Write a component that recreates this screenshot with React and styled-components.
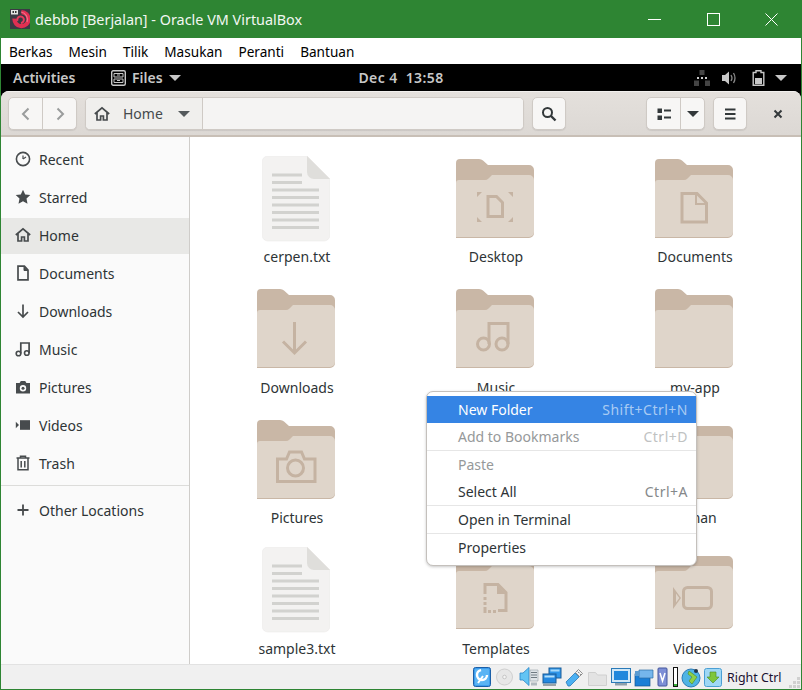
import React from 'react';
import styled, { createGlobalStyle } from 'styled-components';

const Global = createGlobalStyle`
  html, body { margin: 0; padding: 0; width: 802px; height: 690px; overflow: hidden; background: #2e8533; }
  * { box-sizing: border-box; }
`;
const GF = `"Noto Sans", "Open Sans", sans-serif`;

const Win = styled.div`display:flex;flex-direction:column;width:802px;height:690px;background:#2e8533;padding:0 1px 1px;font-family:${GF};`;
const TitleBar = styled.div`display:flex;align-items:center;height:38px;flex:none;color:#f2f7f2;font-size:14.4px;padding-left:9px;`;
const TitleText = styled.span`margin-left:5px;flex:1;`;
const WinBtn = styled.div`width:58.5px;height:38px;display:flex;align-items:center;justify-content:center;`;
const MenuBar = styled.div`display:flex;align-items:center;gap:16px;height:26px;flex:none;background:#fff;color:#000;font-size:13.6px;padding-left:8px;`;
const MenuLabel = styled.span``;
const Screen = styled.div`flex:1;min-height:0;display:flex;flex-direction:column;background:#000;`;
const TopBar = styled.div`height:27px;flex:none;display:flex;align-items:center;color:#c8c8c8;font-size:14px;font-weight:600;padding-left:12px;position:relative;`;
const Activities = styled.span`width:98px;`;
const AppMenu = styled.div`display:flex;align-items:center;gap:6px;flex:1;`;
const Clock = styled.span`position:absolute;left:0;right:0;text-align:center;letter-spacing:.4px;`;
const Tray = styled.div`display:flex;align-items:center;gap:10px;padding-right:14px;`;
const App = styled.div`flex:1;min-height:0;display:flex;flex-direction:column;background:#fafafa;border-radius:8px 8px 0 0;overflow:hidden;`;
const Header = styled.div`height:46px;flex:none;display:flex;align-items:center;background:linear-gradient(#e4e0dc,#dcd8d4);border-top:1px solid #f2f0ee;border-bottom:2px solid #c8bfb6;padding:0 0 0 7px;`;
const Group = styled.div`display:flex;height:33px;margin-right:${p=>p.$mr||0}px;border:1px solid #cfcac5;border-radius:5px;background:#f7f6f5;box-shadow:0 1px 1px rgba(0,0,0,.08);overflow:hidden;flex:none;`;
const Btn = styled.div`width:${p=>p.$w}px;display:flex;align-items:center;justify-content:center;gap:${p=>p.$gap||0}px;color:#454a4c;font-size:14px;border-left:${p=>p.$div?'1px solid #cfcac5':'none'};`;
const Entry = styled.div`width:321px;border-left:1px solid #cfcac5;background:#f5f4f3;`;
const HomeCrumb = styled.div`width:116px;display:flex;align-items:center;padding-left:8px;color:#454a4c;font-size:14px;background:#f0efed;`;
const CrumbText = styled.span`margin-left:13px;margin-right:15px;`;
const CloseBtn = styled.div`width:61px;flex:none;display:flex;align-items:center;justify-content:center;`;
const Body = styled.div`flex:1;min-height:0;display:flex;position:relative;`;
const Side = styled.nav`width:189px;flex:none;background:#fafafa;border-right:1px solid #cfcdca;padding-top:5px;`;
const SideRow = styled.div`height:36px;margin-bottom:2px;padding-bottom:2px;display:flex;align-items:center;padding-left:14px;gap:8px;font-size:14px;color:#2e3436;background:${p=>p.$on?'#e8e8e6':'transparent'};`;
const SideSep = styled.div`height:1px;background:#dcdcda;margin:3px 0 7px;`;
const Main = styled.main`flex:1;min-width:0;background:#fff;display:grid;grid-template-columns:repeat(3,199px);grid-auto-rows:130.67px;padding:13px 0 0 7.5px;overflow:hidden;`;
const Cell = styled.div`display:flex;flex-direction:column;align-items:center;`;
const IconBox = styled.div`height:97px;padding-right:3px;display:flex;align-items:center;justify-content:center;`;
const Label = styled.div`font-size:14px;line-height:20px;color:#2e3436;`;
const Pop = styled.div`position:absolute;left:425px;top:254px;width:271px;height:175px;background:#fff;border:1px solid #c4c0bc;border-radius:7px;padding:4px 0;box-shadow:0 1px 3px rgba(0,0,0,.22);font-size:14px;`;
const PopItem = styled.div`height:27px;display:flex;align-items:center;justify-content:space-between;padding:0 8px 0 31px;color:${p=>p.$hi?'#fff':p.$off?'#96999a':'#2e3436'};background:${p=>p.$hi?'#3584e4':'transparent'};`;
const Accel = styled.span`letter-spacing:.5px;color:${p=>p.$hi?'#a9cbf3':p.$off?'#c0c2c2':'#85888a'};`;
const PopSep = styled.div`height:1px;background:#e6e6e6;`;
const Status = styled.footer`height:25px;flex:none;display:flex;align-items:center;background:#f0f0f0;border-top:1px solid #e2e2e2;padding-left:472px;position:relative;color:#1a1030;font-size:12.4px;`;
const StatusIcon = styled.span`display:flex;margin-right:${p=>p.$mr??3}px;`;
const HostKey = styled.span`margin-left:4px;`;
const Grip = styled.svg`position:absolute;right:1px;bottom:1px;`;

const S = ({ children, size = 16, vb = 16, color = '#474b4d' }) => (
  <svg width={size} height={size} viewBox={`0 0 ${vb} ${vb}`} fill="none" stroke={color} strokeWidth="1.6" style={{flex:'none'}}>{children}</svg>
);

const VBoxLogo = () => (
  <svg width="20" height="20" viewBox="0 0 20 20">
    <rect width="20" height="20" fill="#3b3a44" />
    <path d="M11.500 3.200a7 7 0 1 1-7 6.500" stroke="#e12f52" strokeWidth="4.200" fill="none" />
    <path d="M11 3a7.500 7.500 0 0 1 6 10" stroke="#f2708a" strokeWidth="1.200" fill="none" />
    <path d="M7.500 12a3.300 3.300 0 1 1 3.500 2" stroke="#e83a5c" strokeWidth="2" fill="none" />
    <rect x="1" y="1" width="7" height="4.500" fill="#e4e4e4" />
    <rect x="2.500" y="2" width="1.500" height="2" fill="#333" /><rect x="5" y="2" width="1.500" height="2" fill="#333" />
  </svg>
);

const sideIcons = {
  recent: <S><circle cx="8" cy="8" r="6.600" /><path d="M8 8l3-2" strokeWidth="1.200" /><path d="M8 4.500V8" strokeWidth="1.200" /></S>,
  star: <S><path d="M8 .8l2.200 4.700 5.100.6-3.800 3.500 1 5.100L8 12.200l-4.500 2.500 1-5.100L.7 6.100l5.100-.6z" fill="#474b4d" stroke="none" /></S>,
  home: <S><path d="M.8 8L8 1.800 15.200 8M3 6.500V14h3.600v-4h2.800v4H13V6.500" strokeWidth="1.700" /></S>,
  doc: <S><path d="M3 1.200h6.400L13 5v9.800H3z" strokeWidth="1.700" /><path d="M9 1.500V5.500h4" fill="#474b4d" strokeWidth="1" /></S>,
  down: <S><path d="M8 1.500v12.500M3 9l5 5 5-5" strokeWidth="1.700" /></S>,
  music: <S><circle cx="3.500" cy="12.500" r="2.300" /><circle cx="11.800" cy="12" r="2.300" /><path d="M5.800 12.500V2h8.300v10" strokeWidth="1.700" /></S>,
  camera: <S><path fillRule="evenodd" clipRule="evenodd" d="M1 4h3.600l1.200-2h4.400l1.200 2H15v10.500H1zM8 6a3.200 3.200 0 1 0 0 6.400A3.200 3.200 0 0 0 8 6z" fill="#474b4d" stroke="none" /><circle cx="8" cy="9.200" r="1.500" fill="#474b4d" stroke="none" /></S>,
  video: <S><rect x="5" y="3.200" width="10" height="9.600" fill="#474b4d" stroke="none" /><path d="M.8 4.800L4 8 .8 11.200z" fill="#474b4d" stroke="none" /></S>,
  trash: <S><path d="M1.500 3h13M5.500 3V1.300h5V3M3 3.500v11.200h10V3.500M6.200 6v6.500M9.800 6v6.500" strokeWidth="1.500" /></S>,
  plus: <S><path d="M8 2.500v11M2.500 8h11" strokeWidth="1.800" /></S>,
};

const sideItems = [
  ['recent','Recent'],['star','Starred'],['home','Home',true],['doc','Documents'],['down','Downloads'],
  ['music','Music'],['camera','Pictures'],['video','Videos'],['trash','Trash'],
];

const G = '#c5b3a2';
const glyphs = {
  none: null,
  desktop: <g>
    <path d="M32 37.500h8.500l6 6V57.500H32z" fill="none" stroke={G} strokeWidth="3" />
    <path d="M21 33h5l-5 5zM57 33h-5l5 5zM21 63h5l-5-5zM57 63h-5l5-5z" fill={G} /></g>,
  docs: <g><path d="M27 34.500h15l9.500 9.500v19H27z" fill="none" stroke={G} strokeWidth="3" /><path d="M41 35v10h10" fill="none" stroke={G} strokeWidth="2" /></g>,
  down: <path d="M37.500 33v31M26 52.500l11.500 11.500L49 52.500" fill="none" stroke={G} strokeWidth="3" />,
  music: <g fill="none" stroke={G} strokeWidth="3"><circle cx="27.500" cy="55" r="6" /><circle cx="46" cy="55" r="6" /><path d="M33 55V34.500H52V55" /></g>,
  camera: <g fill="none" stroke={G} strokeWidth="3"><path d="M20.500 39h9l3-7h12l3 7h10.500v22.500h-37.500z" /><circle cx="38.500" cy="48" r="8" /></g>,
  templates: <g><path d="M29 44V34.500h13l8 8V60.500h-8" fill="none" stroke={G} strokeWidth="3" /><path d="M27.500 47h3v3h-3zM27.500 52h3v3h-3zM27.500 57h3v3h-3zM27.500 60h3v3h-3zM32 60h3v3h-3zM37 60h3v3h-3z" fill={G} /><path d="M41 35v9h9" fill={G} /></g>,
  video: <g><rect x="28.500" y="37.500" width="28" height="21" rx="4" fill="none" stroke={G} strokeWidth="3" /><path d="M18 37l8 11-8 11zM21 43.500v9l3.300-4.500z" fill={G} fillRule="evenodd" /></g>,
};

const Folder = ({ g }) => (
  <svg width="78" height="80" viewBox="0 0 78 80">
    <path d="M4 0H23q2.500 0 4 1.500L32 6H73a5 5 0 0 1 5 5V74a5 5 0 0 1-5 5H0V4a4 4 0 0 1 4-4z" fill="#c9b7a6" />
    <path d="M0 24a3 3 0 0 1 3-3H29q2 0 3.500-1.500L36 16H73a5 5 0 0 1 5 5V73a5 5 0 0 1-5 5H0z" fill="#dfd5ca" />
    {glyphs[g]}
  </svg>
);

const lineYs = [23.500,31,38.500,46,53.500,61,68.500,76];
const TextFile = () => (
  <svg width="68" height="86" viewBox="0 0 68 86">
    <path d="M6 0H45L68 23V79a6 6 0 0 1-6 6H6a6 6 0 0 1-6-6V6a6 6 0 0 1 6-6z" fill="#f3f2f1" stroke="#ecebe9" strokeWidth=".6" />
    <path d="M45 0L68 23H52a7 7 0 0 1-7-7z" fill="#dfdedb" />
    {lineYs.map((y, i) => <rect key={y} x="10" y={y - 6} width={i < 2 ? 30 : 47} height="3" fill="#d2d2cf" />)}
  </svg>
);

const files = [
  ['cerpen.txt','file'],['Desktop','desktop'],['Documents','docs'],
  ['Downloads','down'],['Music','music'],['my-app','none'],
  ['Pictures','camera'],['','none'],['roman','none'],
  ['sample3.txt','file'],['Templates','templates'],['Videos','video'],
];

const menu = [
  { t:'New Folder', a:'Shift+Ctrl+N', hi:true },
  { t:'Add to Bookmarks', a:'Ctrl+D', off:true }, { sep:true },
  { t:'Paste', off:true }, { t:'Select All', a:'Ctrl+A' }, { sep:true },
  { t:'Open in Terminal' }, { sep:true }, { t:'Properties' },
];

const Hdd = () => <svg width="18" height="20" viewBox="0 0 18 20"><rect x=".5" y=".5" width="17" height="19" rx="2" fill="#3d9cec" stroke="#1a5fa8" /><rect x="2" y="2" width="14" height="16" rx="1" fill="#5ab4f4" /><circle cx="9" cy="8" r="5" fill="none" stroke="#fff" strokeWidth="2.400" strokeDasharray="22 10" /><path d="M10 9L5 16" stroke="#fff" strokeWidth="2" /></svg>;
const Cd = () => <svg width="17" height="18" viewBox="0 0 17 18"><circle cx="8.500" cy="9" r="8" fill="#e7e7e7" stroke="#cfcfcf" /><circle cx="8.500" cy="9" r="1.800" fill="#f5f5f5" stroke="#c6c6c6" /></svg>;
const Audio = () => <svg width="20" height="20" viewBox="0 0 20 20"><path d="M1 6h3l6-5.500v18L4 13H1z" fill="#63c4f4" stroke="#2a86c8" strokeWidth=".8" /><path d="M11 3h8v11h-8z" fill="#dfe4e8" stroke="#98a2a9" strokeWidth=".6" /><path d="M12 5.500h6M12 8h6M12 10.500h6" stroke="#6f7a82" /><rect x="12" y="15.500" width="6" height="3" fill="#b2bac0" /></svg>;
const Net = () => <svg width="20" height="20" viewBox="0 0 20 20"><rect x="7" y="1" width="12" height="10" fill="#2e96ea" stroke="#1b5c98" /><rect x="8.500" y="2.500" width="9" height="2" fill="#a6d8f8" /><rect x="1" y="7" width="13" height="9" fill="#2488e0" stroke="#1b5c98" /><rect x="2.500" y="8.500" width="10" height="2" fill="#b4e0fa" /><rect x="1" y="17" width="13" height="2" fill="#9aa3a8" /></svg>;
const Usb = () => <svg width="19" height="20" viewBox="0 0 19 20"><path d="M1 15l9-9 4 4-9 9H3z" fill="#4cb0f2" stroke="#2a7ab8" strokeWidth=".8" /><path d="M10.500 5.500l3-3 4 4-3 3z" fill="#f4f4f4" stroke="#777" strokeWidth=".8" /><path d="M13 4.800l1 1M15 6.800l1 1" stroke="#555" /></svg>;
const Share = () => <svg width="19" height="17" viewBox="0 0 19 17"><path d="M.5 3.500h7l2 2.500h9v10.500H.5z" fill="#e3e3e3" stroke="#d0d0d0" /></svg>;
const Disp = () => <svg width="20" height="18" viewBox="0 0 20 18"><rect x=".5" y=".5" width="19" height="14" fill="#cfe7f7" stroke="#2a7ab8" /><rect x="3" y="3" width="14" height="9" fill="#1f87dc" /><rect x="4" y="15" width="12" height="2.500" fill="#8fa0ab" /></svg>;
const Cap = () => <svg width="20" height="20" viewBox="0 0 20 20"><rect x="1" y="7" width="15" height="12" fill="#1b7fd6" stroke="#14548f" strokeWidth=".7" /><path d="M5 3h14v8H5z" fill="#74b6ec" stroke="#2b6ea8" strokeWidth=".7" /><path d="M1 4h5v5H1z" fill="#5c9bd0" /></svg>;
const Chip = () => <svg width="11" height="20" viewBox="0 0 11 20"><rect x="1" y="1" width="9" height="18" rx="1" fill="#7d8fd6" stroke="#44569d" /><path d="M3 6l2.500 8L8 6" stroke="#fff" strokeWidth="1.500" fill="none" /></svg>;
const Bar = () => <svg width="5" height="20" viewBox="0 0 5 20"><rect x=".5" y=".5" width="4" height="19" fill="#fff" stroke="#111" /><rect x="1" y="17" width="3" height="2" fill="#38b038" /></svg>;
const Mouse = () => <svg width="22" height="22" viewBox="0 0 22 22"><circle cx="10" cy="12" r="9" fill="#4fb4e4" stroke="#2a7ab8" /><path d="M8 5l8 6-5 7-3-3 3-4-4-3z" fill="#8fd146" stroke="#4d8a1f" strokeWidth=".6" /><circle cx="15" cy="5" r="2" fill="#234" /></svg>;
const Arrow = () => <svg width="18" height="19" viewBox="0 0 18 19"><rect x=".5" y=".5" width="17" height="18" rx="2" fill="#9fd8f5" stroke="#4b9fd4" /><path d="M6 4h6v5h3l-6 6-6-6h3z" fill="#7ec63c" stroke="#4a8a1e" strokeWidth=".6" /></svg>;

export default function AppRoot() {
  return (
    <Win>
      <Global />
      <TitleBar>
        <VBoxLogo />
        <TitleText>debbb [Berjalan] - Oracle VM VirtualBox</TitleText>
        <WinBtn><svg width="13" height="13" viewBox="0 0 13 13"><path d="M0 6.500h13" stroke="#fff" /></svg></WinBtn>
        <WinBtn><svg width="13" height="13" viewBox="0 0 13 13"><rect x=".5" y=".5" width="12" height="12" fill="none" stroke="#fff" /></svg></WinBtn>
        <WinBtn><svg width="13" height="13" viewBox="0 0 13 13"><path d="M.5.500l12 12M12.500.500l-12 12" stroke="#fff" /></svg></WinBtn>
      </TitleBar>
      <MenuBar>
        {['Berkas','Mesin','Tilik','Masukan','Peranti','Bantuan'].map(t => <MenuLabel key={t}>{t}</MenuLabel>)}
      </MenuBar>
      <Screen>
        <TopBar>
          <Activities>Activities</Activities>
          <AppMenu>
            <svg width="15" height="16" viewBox="0 0 15 16"><rect x=".7" y=".7" width="13.600" height="14.600" rx="1.500" fill="none" stroke="#c8c8c8" strokeWidth="1.400" /><path d="M3 3.500h9v3.500H3zM3 9h9v3.500H3z" fill="none" stroke="#c8c8c8" /><path d="M6 5h3M6 10.500h3" stroke="#c8c8c8" /></svg>
            <span>Files</span>
            <svg width="12" height="6" viewBox="0 0 12 6"><path d="M0 0h12L6 6z" fill="#c8c8c8" /></svg>
          </AppMenu>
          <Clock>Dec 4&nbsp;&nbsp;13:58</Clock>
          <Tray>
            <svg width="16" height="16" viewBox="0 0 16 16"><path d="M5.500 0h5v5h-5zM0 10.500h5V16H0zM11 10.500h5V16h-5z" fill="#444" /><path d="M3 7h2v2H3zM7 7h2v2H7zM11 7h2v2h-2z" fill="#ccc" /></svg>
            <svg width="16" height="16" viewBox="0 0 16 16" style={{marginLeft:2}}><path d="M0 5h3l4-3.500v13L3 11H0z" fill="#c8c8c8" /><path d="M9 5q2 3 0 6M11.500 3q3 5 0 10" stroke="#888" strokeWidth="1.300" fill="none" /></svg>
            <svg width="13" height="16" viewBox="0 0 13 16" style={{marginLeft:4}}><path d="M4 .8h5V2.500h2.800v12.800H1.200V2.500H4z" fill="none" stroke="#c8c8c8" strokeWidth="1.400" /><rect x="3" y="8" width="7" height="6" fill="#c8c8c8" /></svg>
            <svg width="12" height="6" viewBox="0 0 12 6"><path d="M0 0h12L6 6z" fill="#c8c8c8" /></svg>
          </Tray>
        </TopBar>
        <App>
          <Header>
            <Group $mr={8}>
              <Btn $w={33}><S size={16} color="#9a9c9c"><path d="M10.500 2.500L5 8l5.500 5.500" strokeWidth="2" /></S></Btn>
              <Btn $w={34} $div><S size={16} color="#9a9c9c"><path d="M5.500 2.500L11 8l-5.500 5.500" strokeWidth="2" /></S></Btn>
            </Group>
            <Group $mr={8}>
              <HomeCrumb>
                <S><path d="M.8 8L8 1.800 15.200 8M3 6.500V14h3.600v-4h2.800v4H13V6.500" strokeWidth="1.700" /></S>
                <CrumbText>Home</CrumbText>
                <svg width="12" height="6" viewBox="0 0 12 6"><path d="M0 0h12L6 6z" fill="#555a5c" /></svg>
              </HomeCrumb>
              <Entry />
            </Group>
            <Group $mr={80}>
              <Btn $w={32}><S color="#33383a"><circle cx="6.500" cy="6.500" r="4.500" strokeWidth="2" /><path d="M10 10l4.500 4.500" strokeWidth="2.400" /></S></Btn>
            </Group>
            <Group $mr={8}>
              <Btn $w={33}><S color="#33383a"><path d="M1.500 2.500h4.500v4.500H1.500zM1.500 9.500h4.500V14H1.500z" fill="#33383a" stroke="none" /><path d="M8 4.500h7M8 11.500h7" strokeWidth="2" /></S></Btn>
              <Btn $w={24} $div><svg width="12" height="6" viewBox="0 0 12 6"><path d="M0 0h12L6 6z" fill="#33383a" /></svg></Btn>
            </Group>
            <Group>
              <Btn $w={32}><S color="#33383a"><path d="M3 3.500h10.500M3 8h10.500M3 12.500h10.500" strokeWidth="2" /></S></Btn>
            </Group>
            <CloseBtn><svg width="10" height="10" viewBox="0 0 10 10"><path d="M1.500 1.500l7 7M8.500 1.500l-7 7" stroke="#33383a" strokeWidth="2" /></svg></CloseBtn>
          </Header>
          <Body>
            <Side>
              {sideItems.map(([k,t,on]) => <SideRow key={t} $on={on}>{sideIcons[k]}<span>{t}</span></SideRow>)}
              <SideSep />
              <SideRow>{sideIcons.plus}<span>Other Locations</span></SideRow>
            </Side>
            <Main>
              {files.map(([n,k], i) => (
                <Cell key={i}>
                  <IconBox>{k === 'file' ? <TextFile /> : <Folder g={k} />}</IconBox>
                  <Label>{n}</Label>
                </Cell>
              ))}
            </Main>
            <Pop>
              {menu.map((m, i) => m.sep ? <PopSep key={i} /> : (
                <PopItem key={m.t} $hi={m.hi} $off={m.off}>
                  <span>{m.t}</span>
                  {m.a && <Accel $hi={m.hi} $off={m.off}>{m.a}</Accel>}
                </PopItem>
              ))}
            </Pop>
          </Body>
        </App>
      </Screen>
      <Status>
        <StatusIcon $mr={5}><Hdd /></StatusIcon>
        <StatusIcon $mr={6}><Cd /></StatusIcon>
        <StatusIcon><Audio /></StatusIcon>
        <StatusIcon><Net /></StatusIcon>
        <StatusIcon $mr={4}><Usb /></StatusIcon>
        <StatusIcon $mr={4}><Share /></StatusIcon>
        <StatusIcon><Disp /></StatusIcon>
        <StatusIcon><Cap /></StatusIcon>
        <StatusIcon $mr={5}><Chip /></StatusIcon>
        <StatusIcon><Bar /></StatusIcon>
        <StatusIcon $mr={1}><Mouse /></StatusIcon>
        <StatusIcon $mr={1}><Arrow /></StatusIcon>
        <HostKey>Right Ctrl</HostKey>
        <Grip width="11" height="11" viewBox="0 0 11 11"><path d="M8 0h3v3H8zM4 4h3v3H4zM8 4h3v3H8zM0 8h3v3H0zM4 8h3v3H4zM8 8h3v3H8z" fill="#d0d0d0" /></Grip>
      </Status>
    </Win>
  );
}
